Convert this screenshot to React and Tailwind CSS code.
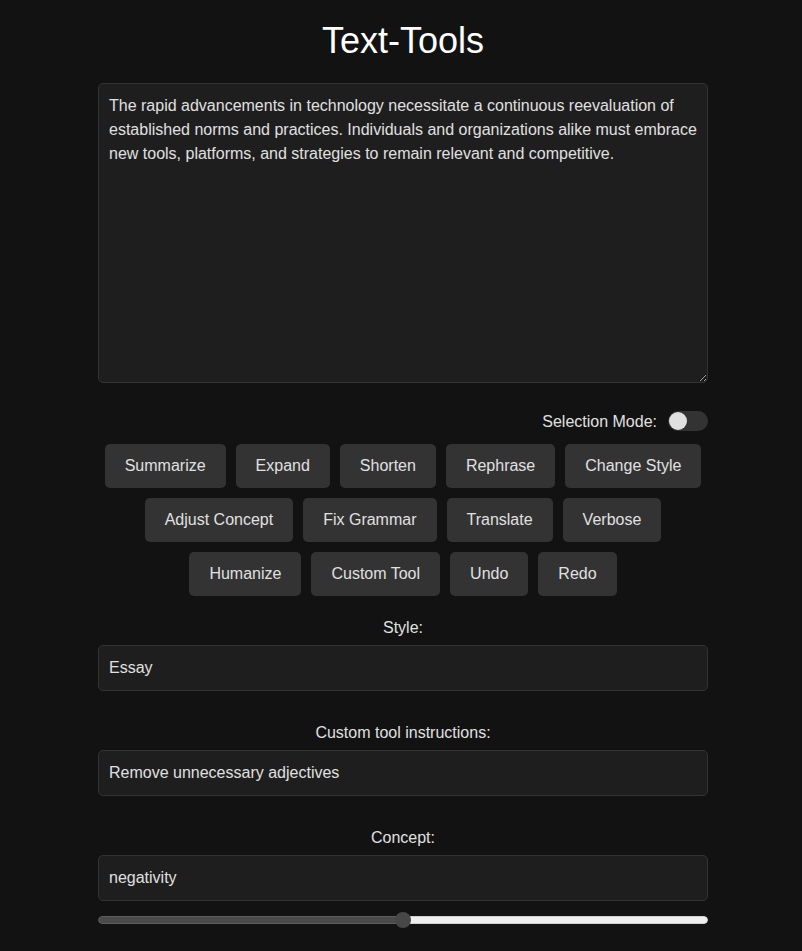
import React from "react";

const rows = [
  ["Summarize", "Expand", "Shorten", "Rephrase", "Change Style"],
  ["Adjust Concept", "Fix Grammar", "Translate", "Verbose"],
  ["Humanize", "Custom Tool", "Undo", "Redo"],
];

const text =
  "The rapid advancements in technology necessitate a continuous reevaluation of established norms and practices. Individuals and organizations alike must embrace new tools, platforms, and strategies to remain relevant and competitive.";

function Field({ label, value, first }) {
  return (
    <div className={first ? "mt-[18px]" : "mt-[33px]"}>
      <div className="text-center text-[16px] leading-[18px] text-[#e0e0e0]">{label}</div>
      <input
        defaultValue={value}
        className="mt-[8px] block h-[46px] w-full rounded-[5px] border border-[#333333] bg-[#1e1e1e] px-[10px] text-[16px] text-[#e0e0e0] outline-none"
      />
    </div>
  );
}

export default function App() {
  const buttons = rows.flat();
  return (
    <div className="min-h-[951px] w-full bg-[#121212] font-['Liberation_Sans',Arial,sans-serif] text-[#e0e0e0]">
      <div className="ml-[98px] w-[610px] pt-[21px]">
        <h1 className="text-center text-[36px] font-normal leading-[40px] text-white">Text-Tools</h1>
        <textarea
          defaultValue={text}
          className="mt-[22px] block h-[300px] w-full rounded-[5px] border border-[#333333] bg-[#1e1e1e] p-[10px] text-[16px] leading-[24px] text-[#e0e0e0] outline-none"
        />
        <div className="mt-[28px] flex h-[20px] items-center justify-end gap-[11px]">
          <span className="pt-[1px] text-[16px] leading-[20px] text-[#e0e0e0]">Selection Mode:</span>
          <div className="flex h-[20px] w-[40px] items-center rounded-full bg-[#333333] pl-[1px]">
            <div className="h-[18px] w-[18px] rounded-full bg-[#e0e0e0]" />
          </div>
        </div>
        <div className="mt-[8px] flex flex-wrap justify-center">
          {buttons.map((b) => (
            <button
              key={b}
              className="m-[5px] flex h-[44px] items-center rounded-[5px] bg-[#333333] px-[20px] text-[16px] text-[#e0e0e0]"
            >
              {b}
            </button>
          ))}
        </div>
        <Field label="Style:" value="Essay" first />
        <Field label="Custom tool instructions:" value="Remove unnecessary adjectives" />
        <Field label="Concept:" value="negativity" />
        <div className="relative mt-[11px] flex h-[16px] items-center">
          <div className="flex h-[8px] w-full overflow-hidden rounded-full">
            <div className="h-full w-1/2 rounded-l-full border border-[#5c5c5c] bg-[#4a4a4a]" />
            <div className="h-full w-1/2 rounded-r-full border border-[#cfcfcf] bg-[#efefef]" />
          </div>
          <div className="absolute left-1/2 top-0 h-[16px] w-[16px] -translate-x-1/2 rounded-full bg-[#474747]" />
        </div>
      </div>
    </div>
  );
}
